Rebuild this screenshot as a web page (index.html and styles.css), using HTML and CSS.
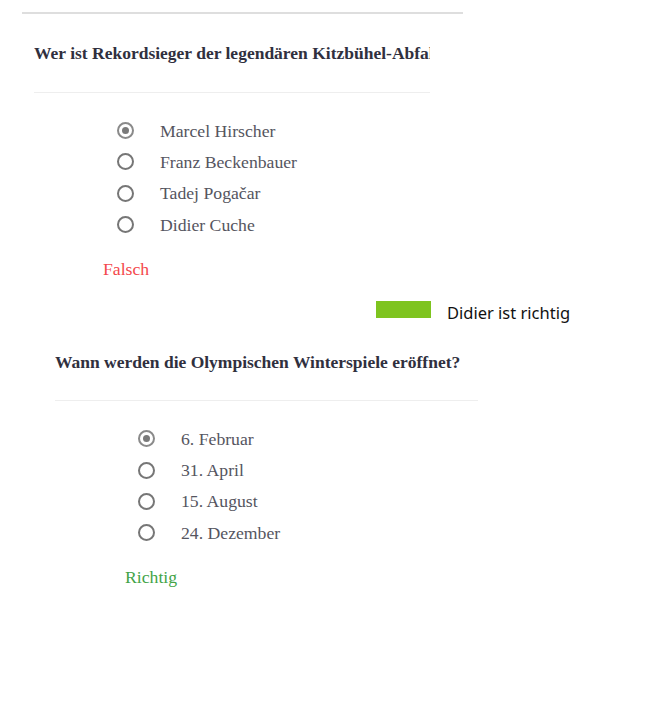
FILE: index.html
```html
<!DOCTYPE html>
<html lang="de">
<head>
<meta charset="utf-8">
<title>Quiz</title>
<link rel="stylesheet" href="styles.css">
</head>
<body>
<div class="top-rule"></div>

<section class="quiz quiz-one">
  <h2 class="question">Wer ist Rekordsieger der legendären Kitzbühel-Abfahrt?</h2>
  <div class="rule"></div>
  <ul class="options">
    <li class="option"><span class="radio checked"></span><span class="label">Marcel Hirscher</span></li>
    <li class="option"><span class="radio"></span><span class="label">Franz Beckenbauer</span></li>
    <li class="option"><span class="radio"></span><span class="label">Tadej Pogačar</span></li>
    <li class="option"><span class="radio"></span><span class="label">Didier Cuche</span></li>
  </ul>
  <p class="result wrong">Falsch</p>
</section>

<div class="note">
  <span class="note-bar"></span>
  <span class="note-text">Didier ist richtig</span>
</div>

<section class="quiz quiz-two">
  <h2 class="question">Wann werden die Olympischen Winterspiele eröffnet?</h2>
  <div class="rule"></div>
  <ul class="options">
    <li class="option"><span class="radio checked"></span><span class="label">6. Februar</span></li>
    <li class="option"><span class="radio"></span><span class="label">31. April</span></li>
    <li class="option"><span class="radio"></span><span class="label">15. August</span></li>
    <li class="option"><span class="radio"></span><span class="label">24. Dezember</span></li>
  </ul>
  <p class="result right">Richtig</p>
</section>
</body>
</html>
```

FILE: styles.css
```css
html, body {
  margin: 0;
  padding: 0;
  background: #ffffff;
}

body {
  font-family: "Liberation Serif", "Times New Roman", serif;
  color: #555555;
}

.top-rule {
  margin: 12px 0 0 22px;
  width: 441px;
  height: 2px;
  background: #dedede;
}

.quiz {
  overflow: hidden;
}

.quiz-one {
  margin-left: 34px;
  width: 396px;
}

.quiz-two {
  margin-left: 55px;
  width: 423px;
  margin-top: 27px;
}

.question {
  margin: 0;
  font-size: 17.5px;
  font-weight: bold;
  line-height: 20px;
  white-space: nowrap;
  color: #30303e;
}

.quiz-one .question {
  margin-top: 29px;
}

.rule {
  height: 1px;
  background: #eeeeee;
  margin-top: 29px;
}

.quiz-two .rule {
  margin-top: 28px;
}

.options {
  list-style: none;
  margin: 22px 0 0 0;
  padding: 0 0 0 83px;
  display: flex;
  flex-direction: column;
}

.option {
  display: flex;
  align-items: center;
  height: 31.3px;
  gap: 26px;
  font-size: 17.7px;
  color: #555560;
}

.radio {
  box-sizing: border-box;
  width: 17px;
  height: 17px;
  border: 2px solid #767676;
  border-radius: 50%;
  background: #ffffff;
  display: flex;
  align-items: center;
  justify-content: center;
  flex: none;
}

.radio.checked {
  border-color: #8a8a8a;
}

.radio.checked::after {
  content: "";
  width: 7px;
  height: 7px;
  border-radius: 50%;
  background: #7a7a7a;
}

.label {
  line-height: 20px;
}

.result {
  margin: 19px 0 0 69px;
  font-size: 17.7px;
  line-height: 20px;
}

.quiz-two .result {
  margin-left: 70px;
}

.wrong {
  color: #f4474c;
}

.right {
  color: #43a447;
}

.note {
  display: flex;
  align-items: flex-start;
  gap: 16px;
  margin: 22px 0 0 376px;
}

.note-bar {
  width: 55px;
  height: 17px;
  background: #7ec41f;
  flex: none;
}

.note-text {
  font-family: "Noto Sans", "Open Sans", sans-serif;
  font-size: 16.5px;
  line-height: 24px;
  color: #111111;
}
```
